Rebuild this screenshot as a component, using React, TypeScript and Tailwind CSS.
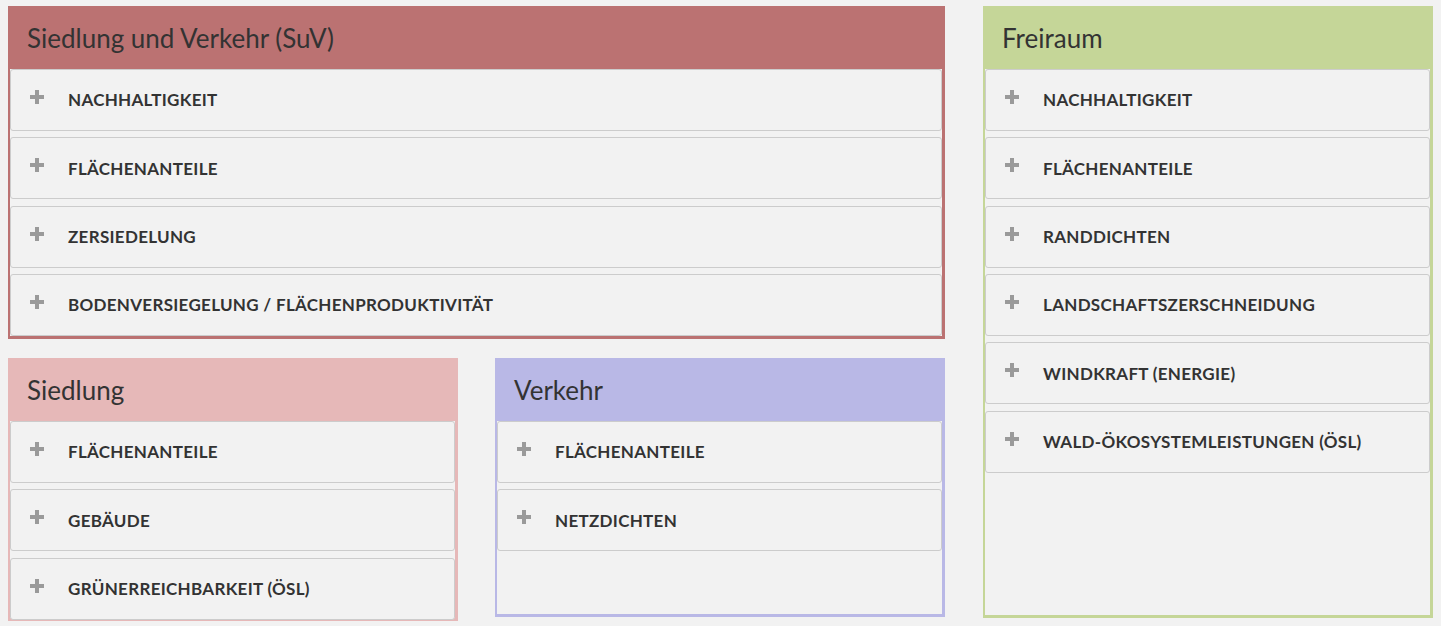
const suv = ['Nachhaltigkeit', 'Flächenanteile', 'Zersiedelung', 'Bodenversiegelung / Flächenproduktivität']
const siedlung = ['Flächenanteile', 'Gebäude', 'Grünerreichbarkeit (ÖSL)']
const verkehr = ['Flächenanteile', 'Netzdichten']
const freiraum = [
  'Nachhaltigkeit',
  'Flächenanteile',
  'Randdichten',
  'Landschaftszerschneidung',
  'Windkraft (Energie)',
  'Wald-Ökosystemleistungen (ÖSL)',
]

function PlusIcon() {
  return (
    <svg width="14" height="14" viewBox="0 0 14 14" className="mb-[6px] shrink-0" aria-hidden="true">
      <rect x="5" y="0" width="4" height="14" fill="#9a9a9a" />
      <rect x="0" y="5" width="14" height="4" fill="#9a9a9a" />
    </svg>
  )
}

function Item({ label }: { label: string }) {
  return (
    <div className="flex h-[62px] items-center rounded-[3px] border border-[#cccccc] bg-[#f2f2f2] pl-[19px]">
      <PlusIcon />
      <span className="ml-[24px] text-[17px] font-bold uppercase tracking-[0.3px] text-[#333333]">{label}</span>
    </div>
  )
}

function Panel({
  title,
  items,
  className,
  header,
}: {
  title: string
  items: string[]
  className: string
  header: string
}) {
  return (
    <section className={`flex flex-col border-b-[3px] border-l-2 border-r-[3px] ${className}`}>
      <h2 className={`flex h-[63px] shrink-0 items-center pl-[17px] pt-[2px] text-[26px] font-normal text-[#333333] ${header}`}>
        {title}
      </h2>
      <div className="flex flex-col gap-[6.33px]">
        {items.map((item) => (
          <Item key={item} label={item} />
        ))}
      </div>
    </section>
  )
}

export default function App() {
  return (
    <div className="min-h-[626px] w-[1441px] bg-[#f2f2f2] pl-[8px] pt-[6px] font-['Lato','Noto_Sans',sans-serif]">
      <div className="flex gap-[38px]">
        <div className="flex w-[937px] flex-col gap-[19px]">
          <Panel title="Siedlung und Verkehr (SuV)" items={suv} className="border-[#bb7272]" header="bg-[#bb7272]" />
          <div className="flex gap-[37px]">
            <Panel title="Siedlung" items={siedlung} className="h-[263px] w-[450px] border-[#e6b8b8]" header="bg-[#e6b8b8]" />
            <Panel title="Verkehr" items={verkehr} className="h-[259px] w-[450px] border-[#b9b8e6]" header="bg-[#b9b8e6]" />
          </div>
        </div>
        <Panel title="Freiraum" items={freiraum} className="h-[612px] w-[450px] border-[#c5d698]" header="bg-[#c5d698]" />
      </div>
    </div>
  )
}
